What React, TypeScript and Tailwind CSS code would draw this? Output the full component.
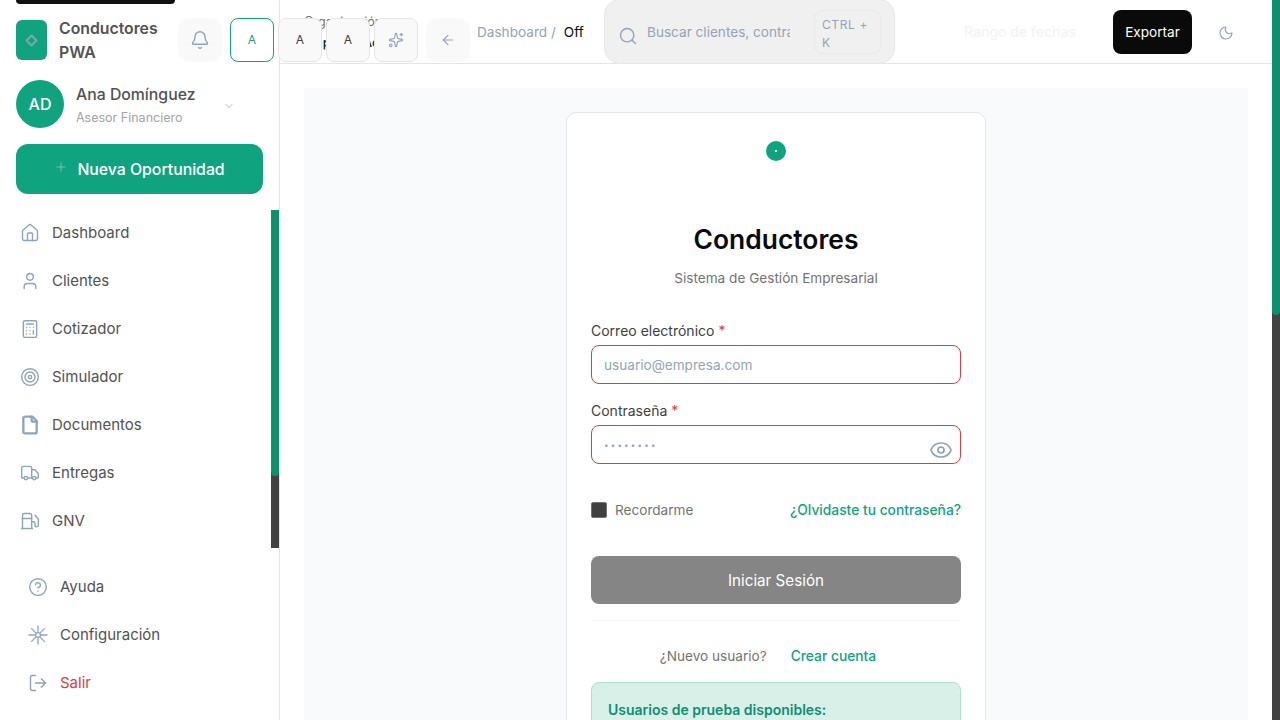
import { ArrowLeft, Bell, ChevronDown, CircleHelp, Eye, File, Fuel, House, LogOut, Moon, Plus, Search, Sparkles, Target, Truck, User, Calculator } from "lucide-react";

const font = "font-['Inter','Liberation_Sans',sans-serif]";
const nav = [
  { label: "Dashboard", Icon: House, w: 1.7 },
  { label: "Clientes", Icon: User, w: 1.7 },
  { label: "Cotizador", Icon: Calculator, w: 1.7 },
  { label: "Simulador", Icon: Target, w: 1.7 },
  { label: "Documentos", Icon: File, w: 2.8 },
  { label: "Entregas", Icon: Truck, w: 1.7 },
  { label: "GNV", Icon: Fuel, w: 1.7 },
];

function Rays() {
  return (
    <svg viewBox="0 0 20 20" className="h-5 w-5 text-[#8fa3bf]" fill="none" stroke="currentColor" strokeWidth="1.3" strokeLinecap="round">
      <circle cx="10" cy="10" r="2.4" />
      <path d="M10 1v5.5M10 13.5V19M1 10h5.5M13.5 10H19M3.6 3.6l4 4M12.4 12.4l4 4M16.4 3.6l-4 4M7.6 12.4l-4 4" />
    </svg>
  );
}

function Sidebar() {
  return (
    <aside className="relative flex h-full w-[280px] shrink-0 flex-col border-r border-[#e5e5e5] bg-white">
      <div className="mx-4 h-1 w-[159px] rounded-b-lg bg-[#111111]" />
      <div className="mt-4 flex h-10 items-center px-4">
        <div className="flex h-10 w-[31px] items-center justify-center rounded-md bg-[#10a37f]">
          <div className="box-content h-[5px] w-[5px] rotate-45 rounded-[1px] border-2 border-[#8e9fa8]" />
        </div>
        <div className="mt-0.5 ml-3 w-[110px] text-[15.8px] leading-6 font-semibold text-[#525252]">Conductores PWA</div>
      </div>
      <div className="mt-5 flex items-center px-4">
        <div className="flex h-12 w-12 items-center justify-center rounded-full bg-[#10a37f] text-base font-medium text-white">AD</div>
        <div className="ml-3 w-[147px]">
          <div className="text-[15.8px] leading-6 font-medium text-[#525252]">Ana Domínguez</div>
          <div className="mt-[3px] text-[12.5px] leading-4 text-[#a3a3a3]">Asesor Financiero</div>
        </div>
        <ChevronDown className="mt-1 h-3 w-3 text-[#94a3b8]" strokeWidth={1.5} />
      </div>
      <button className="mx-4 mt-4 flex h-[50px] w-[247px] items-center justify-center gap-[9px] rounded-xl bg-[#10a37f] pt-0.5 text-[15.8px] font-medium text-white">
        <Plus className="-mt-1.5 h-3.5 w-3.5 text-[#8fbfb6]" strokeWidth={1.5} />
        Nueva Oportunidad
      </button>
      <nav className="mt-[15px] flex flex-col px-5">
        {nav.map(({ label, Icon, w }) => (
          <div key={label} className="flex h-12 items-center gap-3 text-[15px] text-[#525252]">
            <Icon className="h-5 w-5 text-[#8fa3bf]" strokeWidth={w} />
            {label}
          </div>
        ))}
      </nav>
      <div className="mt-[18px] flex flex-col px-7">
        <div className="flex h-12 items-center gap-3 text-[15px] text-[#525252]">
          <CircleHelp className="h-5 w-5 text-[#8fa3bf]" strokeWidth={1.7} />Ayuda
        </div>
        <div className="flex h-12 items-center gap-3 text-[15px] text-[#525252]">
          <Rays />Configuración
        </div>
        <div className="flex h-12 items-center gap-3 text-[15px] text-[#dc3c3c]">
          <LogOut className="h-5 w-5 text-[#8fa3bf]" strokeWidth={1.7} />Salir
        </div>
      </div>
      <div className="absolute top-[210px] right-0 flex h-[338px] w-2 flex-col bg-[#424242]">
        <div className="h-[266px] rounded-b-sm bg-[#0d8f70]" />
      </div>
    </aside>
  );
}

function LetterButton({ active }: { active?: boolean }) {
  return (
    <div className={`flex h-11 w-11 items-center justify-center rounded-lg border text-xs ${active ? "border-[#10a37f] bg-white text-[#10a37f]" : "border-[#e5e5e5] bg-[#f9f9f9] text-[#404040]"}`}>
      A
    </div>
  );
}

function Header() {
  return (
    <header className="relative flex h-16 shrink-0 items-start border-b border-[#e5e5e5] bg-white">
      <div className="absolute top-[11px] left-6 text-[12.5px] leading-[21px] text-[#737373]">
        <div>Organización</div>
        <div className="font-medium text-[#171717]">Empresa: Activa</div>
      </div>
      <div className="relative z-10 -ml-[102px] flex items-start">
        <div className="mt-[18px] flex h-11 w-11 items-center justify-center rounded-xl bg-[#f9f9f9]">
          <Bell className="h-5 w-5 text-[#8fa3bf]" strokeWidth={1.7} />
        </div>
        <div className="mt-[18px] ml-2"><LetterButton active /></div>
        <div className="mt-[18px] ml-1"><LetterButton /></div>
        <div className="mt-[18px] ml-1"><LetterButton /></div>
        <div className="mt-[18px] ml-1 flex h-11 w-11 items-center justify-center rounded-lg border border-[#e5e5e5] bg-[#f9f9f9]">
          <Sparkles className="h-4 w-4 text-[#8fa3bf]" strokeWidth={1.7} />
        </div>
        <div className="mt-[18px] ml-2 flex h-11 w-11 items-center justify-center rounded-xl bg-[#f9f9f9]">
          <ArrowLeft className="h-4 w-4 text-[#8fa3bf]" strokeWidth={1.7} />
        </div>
        <div className="mt-[22px] ml-[7px] flex w-[127px] gap-2 text-[13.6px] leading-5">
          <span className="text-[#94a3b8]">Dashboard /</span>
          <span className="text-[#0a0a0a]">Off</span>
        </div>
        <div className="-mt-px flex h-[65px] w-[291px] items-center rounded-2xl border border-[#e5e7eb] bg-[#f0f0f0] pl-[13px]">
          <Search className="mt-2 h-5 w-5 shrink-0 text-[#8fa3bf]" strokeWidth={1.7} />
          <div className="ml-[9px] w-[143px] overflow-hidden pt-0.5 text-[13.6px] whitespace-nowrap text-[#94a3b8]">Buscar clientes, contratos</div>
          <div className="ml-6 w-[67px] rounded-lg border border-[#e9e9e9] pt-[5px] pr-2 pb-[1px] pl-[7px] text-xs leading-[18px] tracking-wider text-[#94a3b8]">CTRL + K</div>
        </div>
        <div className="mt-[22px] ml-[69px] w-[149px] text-sm leading-5 font-medium text-[#f1f5f9]">Rango de fechas</div>
        <div className="mt-[10px] flex h-11 w-[79px] items-center justify-center rounded-lg bg-[#0a0a0a] text-[13.6px] text-white">Exportar</div>
        <Moon className="mt-[25px] ml-[26px] h-4 w-4 text-[#8fa3bf]" strokeWidth={1.7} />
      </div>
    </header>
  );
}

function Card() {
  return (
    <div className="mx-auto mt-6 w-[420px] rounded-[10px] border border-[#e5e7eb] bg-white px-6 pt-[28px]">
      <div className="flex h-5 justify-center">
        <div className="flex h-5 w-5 items-center justify-center rounded-full bg-[#10a37f]">
          <div className="h-0.5 w-0.5 bg-white" />
        </div>
      </div>
      <h1 className="mt-[60px] text-center text-[26.4px] leading-[36px] font-semibold text-[#0a0a0a]">Conductores</h1>
      <p className="mt-[11px] text-center text-[13.6px] leading-5 text-[#737373]">Sistema de Gestión Empresarial</p>
      <label className="mt-[33px] block text-sm leading-5 text-[#404040]">
        Correo electrónico <span className="text-[#dc3c3c]">*</span>
      </label>
      <div className="mt-1 flex h-[39px] items-center rounded-lg border border-[#dc3c3c] px-3 pt-0.5 text-[13.6px] text-[#94a3b8]">usuario@empresa.com</div>
      <label className="mt-[17px] block text-sm leading-5 text-[#404040]">
        Contraseña <span className="text-[#dc3c3c]">*</span>
      </label>
      <div className="relative mt-1 flex h-[39px] items-center rounded-lg border border-[#dc3c3c] px-3 text-[8px] tracking-[2.2px] text-[#94a3b8]">
        ••••••••
        <Eye className="absolute top-[12px] right-[7px] h-6 w-6 text-[#8fa3bf]" strokeWidth={1.7} />
      </div>
      <div className="mt-[36px] flex items-center justify-between text-[13.6px] leading-5">
        <div className="flex items-center gap-2 text-[#737373]">
          <div className="h-4 w-4 rounded-[2px] border border-[#737373] bg-[#404040]" />
          Recordarme
        </div>
        <span className="text-[13.8px] font-medium text-[#10a37f]">¿Olvidaste tu contraseña?</span>
      </div>
      <button className="mt-[36px] flex h-12 w-full items-center justify-center rounded-lg bg-[#858585] pt-0.5 text-[15.2px] text-white">Iniciar Sesión</button>
      <div className="mt-4 border-t border-[#f3f4f6]" />
      <div className="mt-[25px] flex justify-center gap-6 pr-4 text-[13.6px] leading-5">
        <span className="text-[#737373]">¿Nuevo usuario?</span>
        <span className="text-[13.8px] font-medium text-[#10a37f]">Crear cuenta</span>
      </div>
      <div className="mt-4 h-[120px] rounded-lg border border-[#a9e0cf] bg-[#d9f0e9] px-4 pt-[17px] text-sm leading-5 font-semibold text-[#0d8f70]">
        Usuarios de prueba disponibles:
      </div>
    </div>
  );
}

export default function App() {
  return (
    <div className={`flex h-screen w-[1280px] overflow-hidden bg-white ${font}`}>
      <Sidebar />
      <main className="flex h-full min-w-0 flex-1 flex-col">
        <Header />
        <div className="min-h-0 flex-1 overflow-hidden pt-6 pr-6 pl-6">
          <div className="h-[900px] overflow-hidden bg-[#f9fafb]">
            <Card />
          </div>
        </div>
      </main>
      <div className="flex h-full w-2 shrink-0 flex-col bg-[#424242]">
        <div className="h-[315px] rounded-b-sm bg-[#0d8f70]" />
      </div>
    </div>
  );
}
